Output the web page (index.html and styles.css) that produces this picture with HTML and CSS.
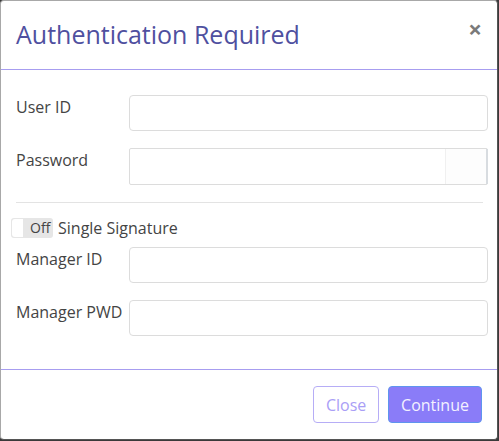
FILE: index.html
```html
<!DOCTYPE html>
<html lang="en">
<head>
    <meta charset="UTF-8" />
    <meta name="viewport" content="width=device-width, initial-scale=1" />
    <title>Authentication Required</title>
    <link rel="stylesheet" href="styles.css">
</head>
<body>

<div class="modal">
    <!-- header -->
    <div class="modal-header">
        <h3 class="modal-title">Authentication Required</h3>
        <span class="close-x">&times;</span>
    </div>

    <div class="modal-body">
        <div class="form-row">
            <label for="userId">User ID</label>
            <input type="text" id="userId" />
        </div>
        <div class="form-row">
            <label for="password">Password</label>
            <div class="pwd-wrap">
                <input type="password" id="password" />
                <span class="pwd-eye"></span>
            </div>
        </div>

        <hr class="divider" />

        <div class="toggle-row">
            <span class="toggle"><span class="knob"></span><span class="toggle-text">Off</span></span>
            <span class="toggle-label">Single Signature</span>
        </div>

        <div class="form-row">
            <label for="mgrId">Manager ID</label>
            <input type="text" id="mgrId" />
        </div>
        <div class="form-row">
            <label for="mgrPwd">Manager PWD</label>
            <input type="password" id="mgrPwd" />
        </div>
    </div>

    <div class="modal-footer">
        <button class="btn btn-close">Close</button>
        <button class="btn btn-continue">Continue</button>
    </div>
</div>

</body>
</html>
```

FILE: styles.css
```css
body {
    margin: 0;
    background-color: #3a3a3a;
    font-family: "Open Sans", "Liberation Sans", sans-serif;
}
.modal {
    width: 496px;
    height: 438px;
    background: #fff;
    border: 1px solid #a8a8a8;
    border-right-color: #555;
    border-bottom-color: #555;
    border-radius: 4px;
    display: flex;
    flex-direction: column;
}
.modal-header {
    height: 68px;
    border-bottom: 1px solid #a79df0;
    display: flex;
    align-items: center;
    justify-content: space-between;
    padding: 0 15px 0 15px;
}
.modal-title {
    margin: 0;
    font-size: 25px;
    font-weight: normal;
    color: #4f509f;
    position: relative;
    top: -1px;
}
.close-x {
    font-size: 24px;
    font-weight: bold;
    color: #7a7a7a;
    line-height: 1;
    position: relative;
    top: -6px;
}
.modal-body {
    height: 274px;
    padding: 25px 9px 0 15px;
    display: flex;
    flex-direction: column;
}
.form-row {
    display: flex;
    align-items: flex-start;
    margin-bottom: 17px;
}
.form-row label {
    width: 113px;
    flex: none;
    font-size: 16px;
    color: #444;
    padding-top: 1px;
}
.form-row input {
    flex: 1;
    height: 36px;
    box-sizing: border-box;
    border: 1px solid #dcdcdc;
    border-radius: 4px;
    font-size: 15px;
    padding: 6px 10px;
    margin: 0;
}
.pwd-wrap {
    flex: 1;
    display: flex;
    position: relative;
}
.pwd-wrap input {
    height: 37px;
    border-radius: 2px;
}
.pwd-eye {
    position: absolute;
    right: 0;
    top: 1px;
    width: 40px;
    height: 35px;
    background: #fdfdfd;
    border-left: 1px solid #f0f0f0;
    border-right: 2px solid #d8dce0;
}
.divider {
    border: none;
    border-top: 1px solid #e3e3e3;
    margin: 0 5px 14px 0;
}
.toggle-row {
    display: flex;
    align-items: center;
    margin: 0 0 8px -5px;
    height: 22px;
}
.toggle {
    display: flex;
    width: 42px;
    height: 20px;
    background: #e6e6e6;
    border-radius: 3px;
    overflow: hidden;
}
.knob {
    width: 11px;
    background: #fff;
    border-radius: 3px 0 0 3px;
    margin: 1px 0 1px 1px;
}
.toggle-text {
    font-size: 14px;
    color: #444;
    line-height: 20px;
    padding-left: 7px;
}
.toggle-label {
    font-size: 16px;
    color: #444;
    margin-left: 5px;
}
.modal-footer {
    flex: 1;
    border-top: 1px solid #a79df0;
    display: flex;
    align-items: center;
    justify-content: flex-end;
    padding: 0 15px 0 0;
    gap: 9px;
}
.btn {
    height: 37px;
    border-radius: 4px;
    font-family: "Open Sans", "Liberation Sans", sans-serif;
    font-size: 16px;
    padding: 0 12px;
    cursor: pointer;
}
.btn-close {
    width: 66px;
    background: #fff;
    border: 1px solid #b6adf6;
    color: #a99ef6;
}
.btn-continue {
    width: 94px;
    background: #8a7cf8;
    border: 1px solid #5f95ee;
    color: #f3f1ff;
}
```
